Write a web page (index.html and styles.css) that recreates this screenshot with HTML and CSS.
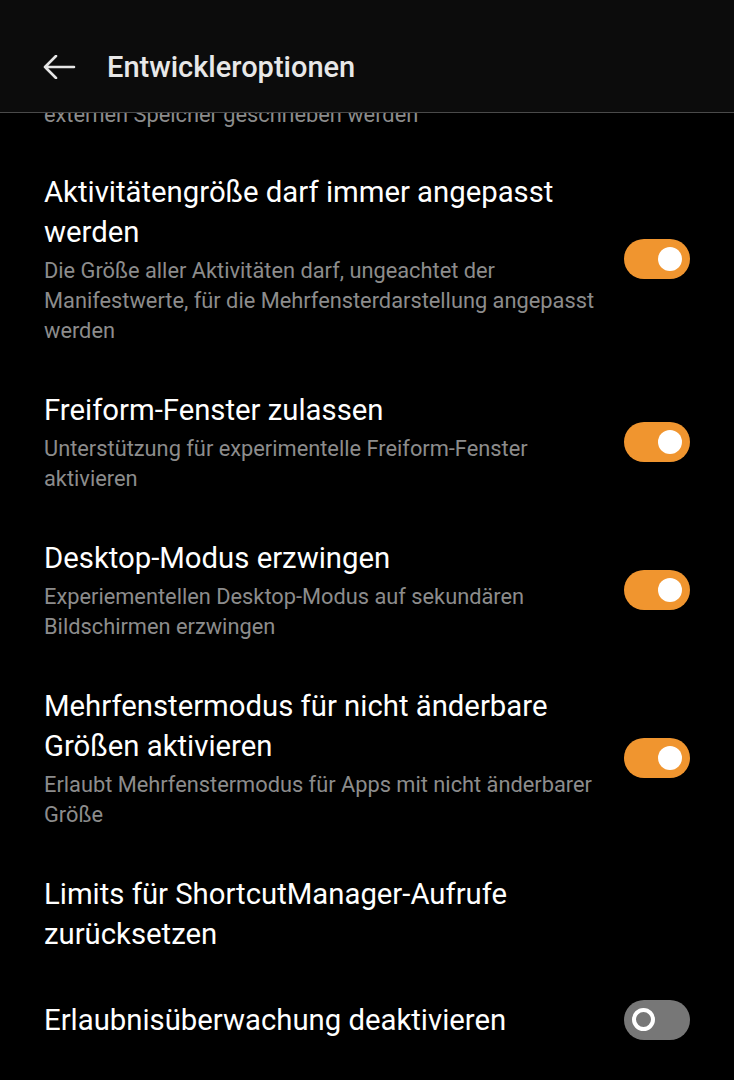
FILE: index.html
```html
<!DOCTYPE html>
<html lang="de">
<head>
    <meta charset="UTF-8">
    <meta name="viewport" content="width=device-width, initial-scale=1.0">
    <title>Entwickleroptionen</title>
    <link rel="stylesheet" href="styles.css">
</head>
<body>
    <!-- Kopfzeile -->
    <header class="appbar">
        <svg class="back" width="34" height="24" viewBox="0 0 34 24">
            <path d="M32 12H3M14 1L3 12l11 11" fill="none" stroke="#e6e6e6" stroke-width="2.6" stroke-linecap="round" stroke-linejoin="round"/>
        </svg>
        <h1>Entwickleroptionen</h1>
    </header>

    <!-- Einstellungen -->
    <ul class="prefs">
        <li class="pref pref-tail">
            <div class="pref-text">
                <p class="summary">externen Speicher geschrieben werden</p>
            </div>
        </li>
        <li class="pref">
            <div class="pref-text">
                <p class="title">Aktivitätengröße darf immer angepasst werden</p>
                <p class="summary">Die Größe aller Aktivitäten darf, ungeachtet der Manifestwerte, für die Mehrfensterdarstellung angepasst werden</p>
            </div>
            <span class="switch on"></span>
        </li>
        <li class="pref">
            <div class="pref-text">
                <p class="title">Freiform-Fenster zulassen</p>
                <p class="summary">Unterstützung für experimentelle Freiform-Fenster aktivieren</p>
            </div>
            <span class="switch on"></span>
        </li>
        <li class="pref">
            <div class="pref-text">
                <p class="title">Desktop-Modus erzwingen</p>
                <p class="summary">Experiementellen Desktop-Modus auf sekundären Bildschirmen erzwingen</p>
            </div>
            <span class="switch on"></span>
        </li>
        <li class="pref">
            <div class="pref-text">
                <p class="title">Mehrfenstermodus für nicht änderbare Größen aktivieren</p>
                <p class="summary">Erlaubt Mehrfenstermodus für Apps mit nicht änderbarer Größe</p>
            </div>
            <span class="switch on"></span>
        </li>
        <li class="pref">
            <div class="pref-text">
                <p class="title">Limits für ShortcutManager-Aufrufe zurücksetzen</p>
            </div>
        </li>
        <li class="pref pref-last">
            <div class="pref-text">
                <p class="title">Erlaubnisüberwachung deaktivieren</p>
            </div>
            <span class="switch"></span>
        </li>
    </ul>
</body>
</html>
```

FILE: styles.css
```css
body {
    font-family: Roboto, "Noto Sans", sans-serif;
    margin: 0;
    padding: 0;
    background-color: #000;
    color: #fff;
    overflow: hidden;
}
/* Kopfzeile */
.appbar {
    position: fixed;
    z-index: 1;
    left: 0;
    top: 0;
    right: 0;
    height: 113px;
    box-sizing: border-box;
    background-color: #0c0c0c;
    border-bottom: 1px solid #4a4a4a;
    display: flex;
    align-items: center;
    padding: 22px 0 0 42px;
}
.back {
    margin-right: 31px;
}
.appbar h1 {
    margin: 0;
    font-size: 29px;
    font-weight: 500;
    color: #e8e8e8;
}
/* Liste */
.prefs {
    list-style: none;
    margin: 0;
    padding: 100px 0 0;
}
.pref {
    display: flex;
    align-items: center;
    padding: 22px 44px;
}
.pref-tail {
    padding-top: 0;
    padding-bottom: 20px;
}
.pref-last {
    padding-top: 24px;
}
.pref-text {
    flex: 1;
    max-width: 562px;
    margin-right: auto;
}
.title {
    margin: 0;
    font-size: 29.3px;
    line-height: 40px;
    color: #fff;
}
.summary {
    margin: 4px 0 0;
    font-size: 21.8px;
    line-height: 30px;
    color: #8c8c8c;
}
.pref-tail .summary {
    margin: 0;
}
/* Schalter */
.switch {
    position: relative;
    flex: none;
    width: 66px;
    height: 40px;
    border-radius: 20px;
    background-color: #777;
}
.switch::after {
    content: "";
    position: absolute;
    top: 8px;
    left: 8px;
    width: 15px;
    height: 15px;
    border: 4.5px solid #fff;
    border-radius: 50%;
}
.switch.on {
    background-color: #f0952f;
}
.switch.on::after {
    left: 34px;
    top: 8px;
    width: 24px;
    height: 24px;
    border: 0;
    background-color: #fff;
}
```
